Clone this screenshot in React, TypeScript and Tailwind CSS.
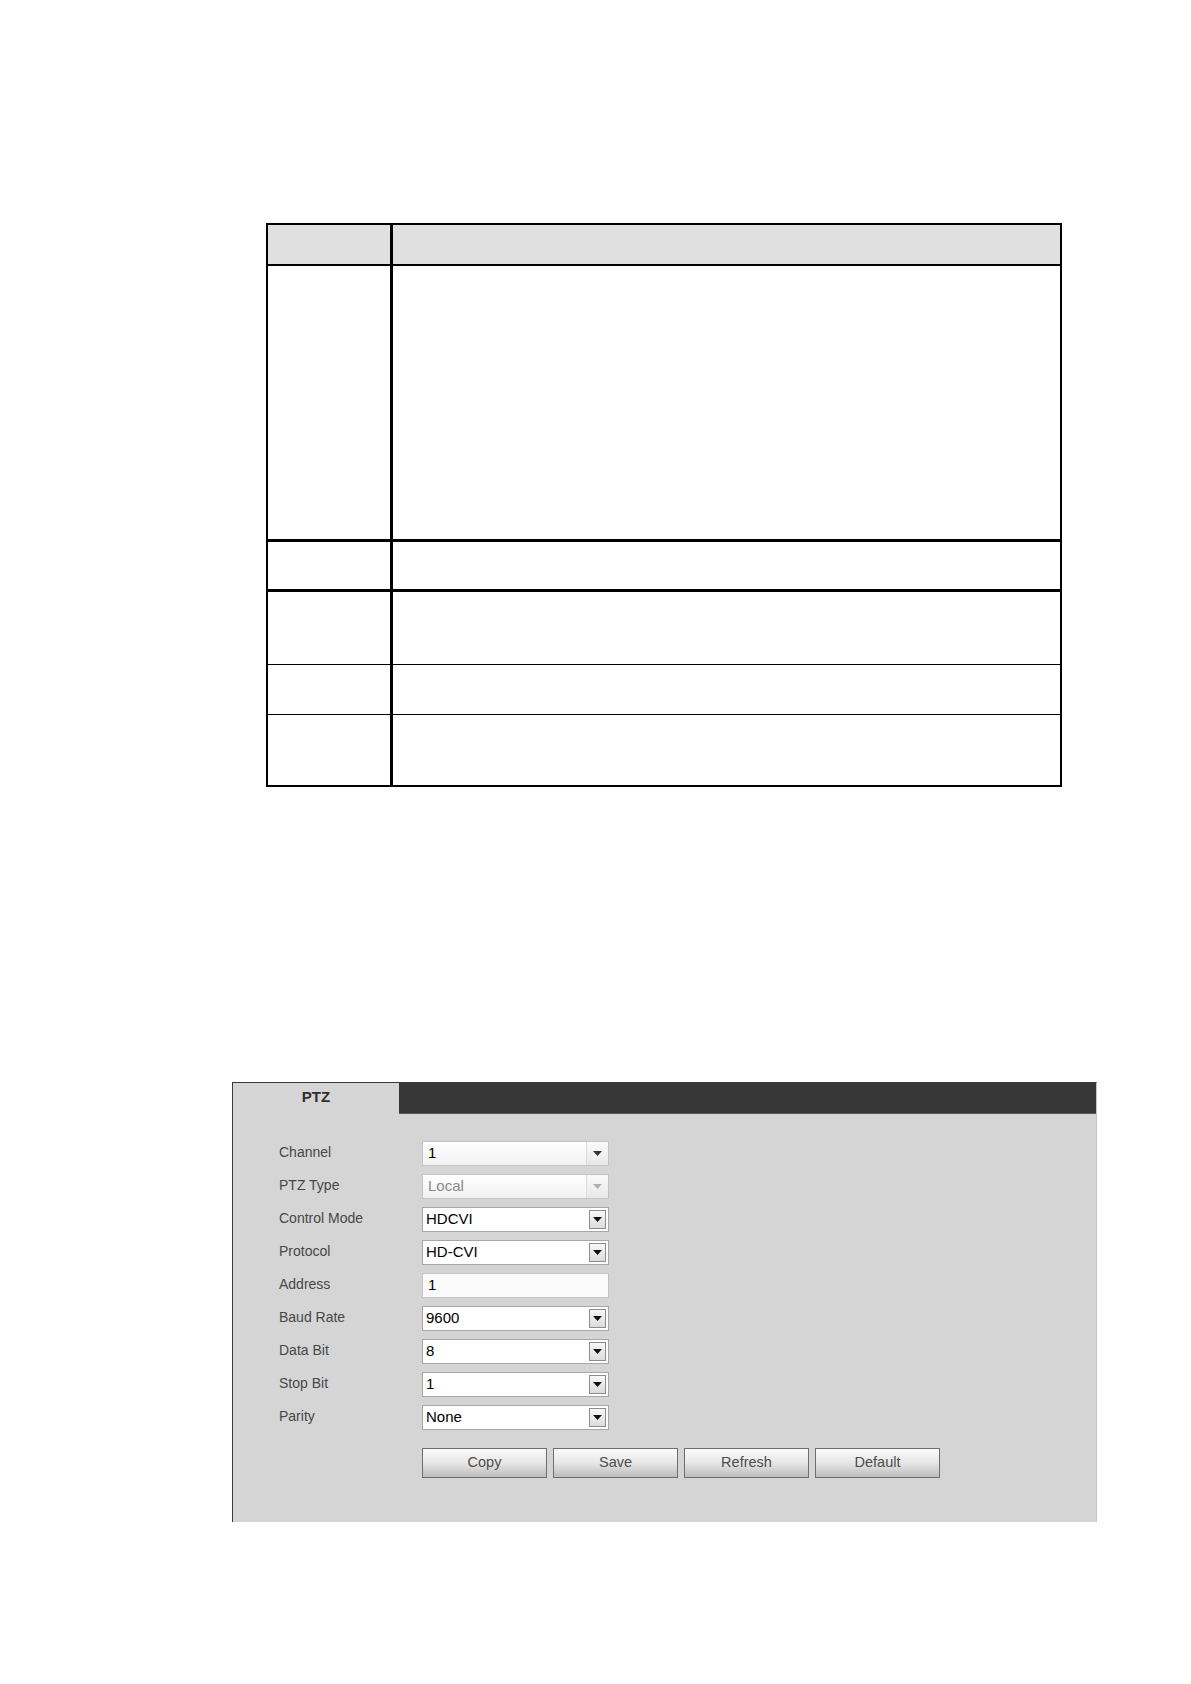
import React from 'react';

type Field = {
  label: string;
  value: string;
  kind: 'select' | 'light' | 'disabled' | 'input';
};

const fields: Field[] = [
  { label: 'Channel', value: '1', kind: 'light' },
  { label: 'PTZ Type', value: 'Local', kind: 'disabled' },
  { label: 'Control Mode', value: 'HDCVI', kind: 'select' },
  { label: 'Protocol', value: 'HD-CVI', kind: 'select' },
  { label: 'Address', value: '1', kind: 'input' },
  { label: 'Baud Rate', value: '9600', kind: 'select' },
  { label: 'Data Bit', value: '8', kind: 'select' },
  { label: 'Stop Bit', value: '1', kind: 'select' },
  { label: 'Parity', value: 'None', kind: 'select' },
];

const Arrow: React.FC<{ color: string }> = ({ color }) => (
  <svg width="9" height="5" viewBox="0 0 9 5">
    <polygon points="0,0 9,0 4.5,5" fill={color} />
  </svg>
);

const FieldControl: React.FC<{ field: Field }> = ({ field }) => {
  if (field.kind === 'input') {
    return (
      <div className="flex h-[25px] w-[187px] items-center border border-[#c4c4c4] bg-[#fbfbfb] pl-[5px] text-[15px] text-black">
        {field.value}
      </div>
    );
  }

  if (field.kind === 'light' || field.kind === 'disabled') {
    const disabled = field.kind === 'disabled';
    return (
      <div className="flex h-[25px] w-[187px] items-stretch border border-[#c4c4c4] bg-gradient-to-b from-[#ffffff] to-[#f1f1f1]">
        <div className={`flex flex-1 items-center pl-[5px] text-[15px] ${disabled ? 'text-[#8a8a8a]' : 'text-black'}`}>
          {field.value}
        </div>
        <div className="flex w-[22px] items-center justify-center border-l border-[#dcdcdc] bg-gradient-to-b from-[#fafafa] to-[#e8e8e8]">
          <Arrow color={disabled ? '#b0b0b0' : '#333333'} />
        </div>
      </div>
    );
  }

  return (
    <div className="flex h-[25px] w-[187px] items-stretch border border-[#a6a6a6] bg-white">
      <div className="flex flex-1 items-center pl-[3px] text-[15px] text-black">{field.value}</div>
      <div className="m-[2px] flex w-[17px] items-center justify-center border border-[#8c8c8c] bg-gradient-to-b from-[#f8f8f8] to-[#dcdcdc]">
        <Arrow color="#111111" />
      </div>
    </div>
  );
};

const rows = [
  { h: 'h-[276px]', b: 'border-b-[3px]' },
  { h: 'h-[50px]', b: 'border-b-[3px]' },
  { h: 'h-[73px]', b: 'border-b' },
  { h: 'h-[50px]', b: 'border-b' },
  { h: 'h-[70px]', b: '' },
];

const App: React.FC = () => {
  return (
    <div className="min-h-[1684px] w-[1191px] bg-white pt-[223px] font-['Liberation_Sans',Arial,sans-serif]">
      {/* description table */}
      <div className="ml-[266px] w-[796px] border-2 border-black">
        <div className="flex h-[41px] border-b-2 border-black bg-[#e0e0e0]">
          <div className="w-[125px] border-r-[3px] border-black" />
          <div className="flex-1" />
        </div>
        {rows.map((r, i) => (
          <div key={i} className={`flex ${r.h} ${r.b} border-black`}>
            <div className="w-[125px] border-r-[3px] border-black" />
            <div className="flex-1" />
          </div>
        ))}
      </div>

      {/* PTZ settings panel */}
      <div className="ml-[232px] mt-[295px] flex h-[440px] w-[865px] flex-col border-l border-t border-r border-l-[#3a3a3a] border-t-[#3a3a3a] border-r-[#c6c6c6] bg-[#d5d5d5]">
        <div className="flex h-[31px]">
          <div className="flex w-[166px] items-center justify-center pb-[3px] text-[15px] font-bold text-[#2e2e2e]">
            PTZ
          </div>
          <div className="flex-1 border-b border-[#5a5a5a] bg-[#373737]" />
        </div>

        <div className="flex flex-col gap-[8px] pl-[46px] pt-[27px]">
          {fields.map((f) => (
            <div key={f.label} className="flex items-center">
              <div className="w-[143px] pb-[3px] text-[14px] text-[#474747]">{f.label}</div>
              <FieldControl field={f} />
            </div>
          ))}
        </div>

        <div className="ml-[189px] mt-[18px] flex gap-[6px]">
          {['Copy', 'Save', 'Refresh', 'Default'].map((b) => (
            <button
              key={b}
              className="h-[30px] w-[125px] border border-[#6e6e6e] bg-gradient-to-b from-[#fbfbfb] via-[#e6e6e6] to-[#bdbdbd] text-[14.5px] text-[#4c4c4c]"
            >
              {b}
            </button>
          ))}
        </div>
      </div>
    </div>
  );
};

export default App;
